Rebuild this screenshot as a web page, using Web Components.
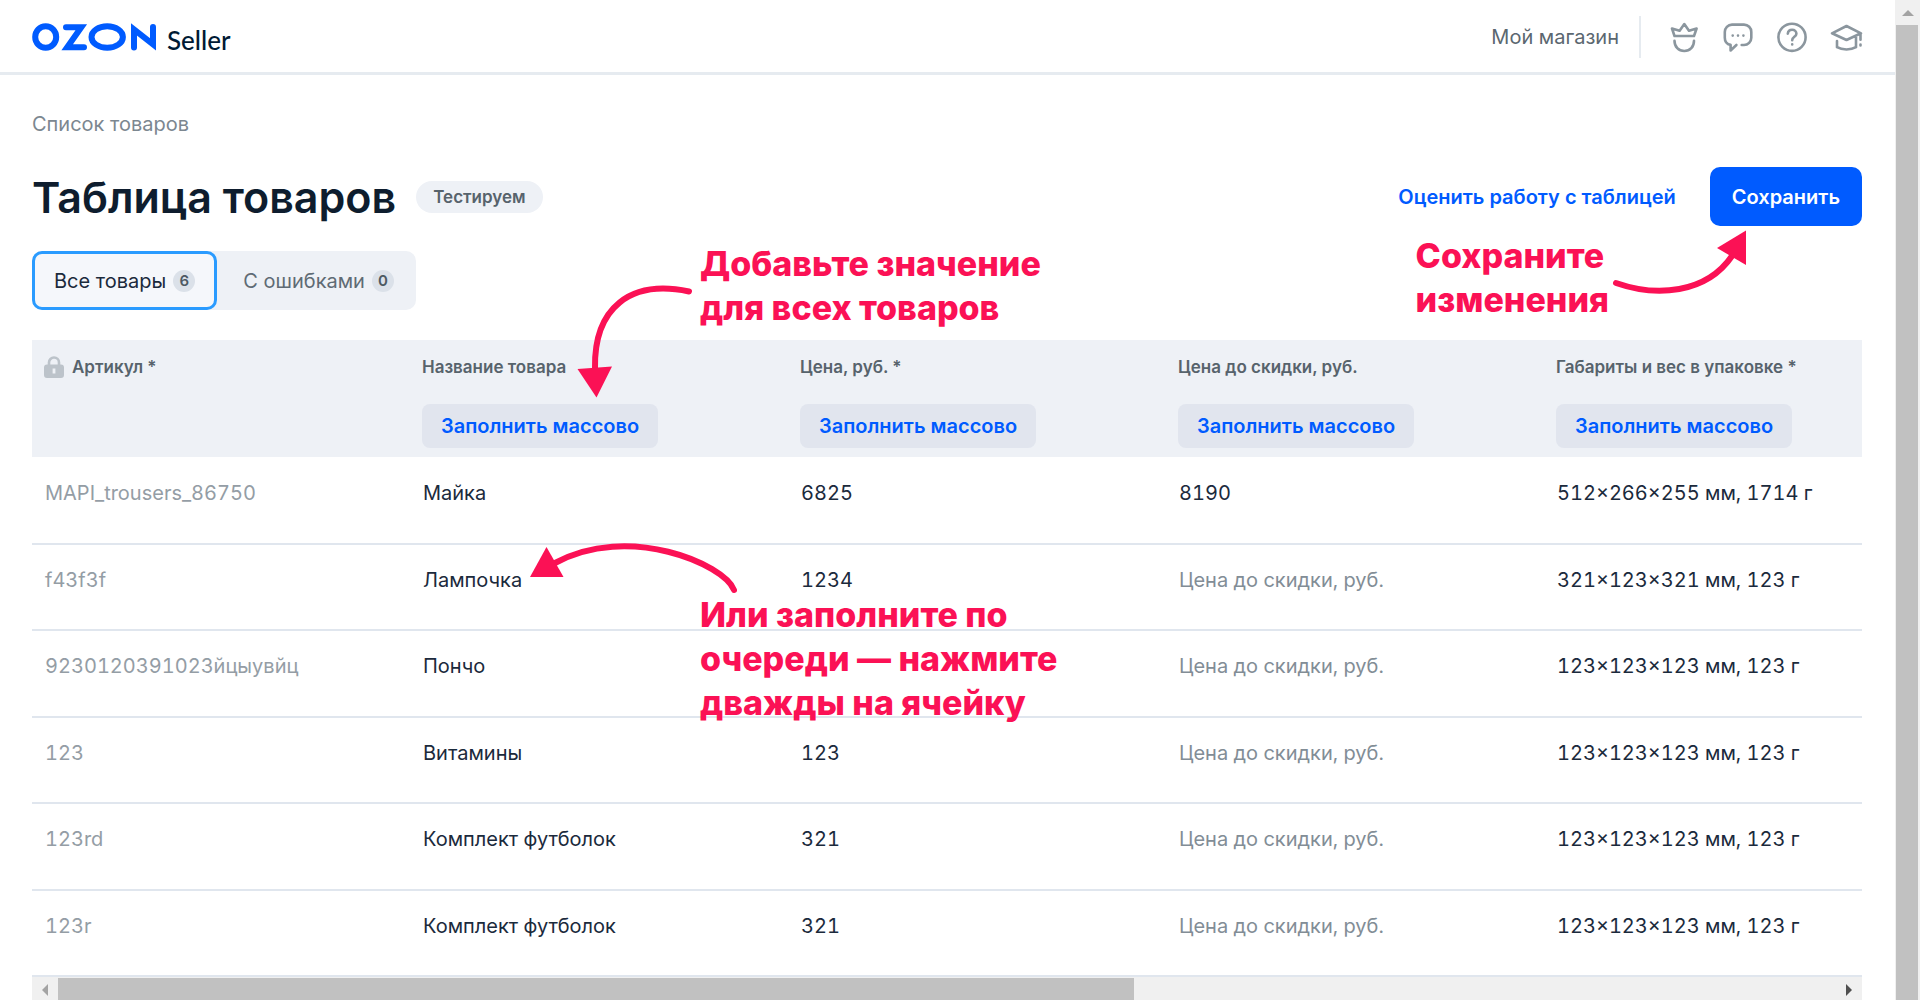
<!DOCTYPE html>
<html lang="ru">
<head>
<meta charset="utf-8">
<title>Таблица товаров — Ozon Seller</title>
<style>
  html, body { height: 100%; margin: 0; }
  body { font: 400 20px/24px Inter, "Liberation Sans", sans-serif; color: #1b2a3c; background: #fff; overflow: hidden; }
</style>
</head>
<body>
<seller-app></seller-app>
<script>
class Base extends HTMLElement {
  constructor() {
    super();
    this.attachShadow({ mode: 'open' }).innerHTML =
      '<style>*{box-sizing:border-box}button{font:inherit;border:0;cursor:pointer}a{text-decoration:none}</style>' + this.view();
  }
}

customElements.define('seller-logo', class extends Base {
  view() { return `
    <style>
      :host { display: block; }
      a { display: flex; align-items: center; gap: 10px; color: #001a34; font: 500 26px/28px Lato, sans-serif; }
      svg { display: block; }
      span { padding-top: 6px; }
    </style>
    <a href="#" aria-label="Ozon Seller">
      <svg width="125" height="28" viewBox="0 0 125 28" fill="none" stroke="#005bff" stroke-width="6" stroke-linecap="round" stroke-miterlimit="10" aria-hidden="true">
        <ellipse cx="13.7" cy="14" rx="10.5" ry="10.8"/>
        <path d="M34 4.2H49.3L35.2 24.2H52"/>
        <ellipse cx="75.2" cy="14" rx="15.7" ry="10.8"/>
        <path d="M102 24.4V6.4L121 21.4V3.9"/>
      </svg>
      <span>Seller</span>
    </a>`; }
});

const ICONS = {
  crown: '<path d="M3 6.5 5.5 14H25L27.6 6.5 20 8.8 15.3 2 10.6 8.8ZM5.5 18.7C5.5 25 9.6 29 15.3 29S25 25 25 18.7"/>',
  chat: '<path d="M18.7 23H21a7.3 7.3 0 0 0 7.3-7.3V10A7.3 7.3 0 0 0 21 2.6H9A7.3 7.3 0 0 0 1.8 10v5.7c0 4 2.2 6.5 5.8 7.2v5.6L13.4 23"/><path d="M9.7 13.6h.01M15 13.6h.01M20.4 13.6h.01"/>',
  help: '<circle cx="15" cy="15.3" r="13.6"/><path d="M10.8 11.6c.3-2.4 2-3.8 4.3-3.8 2.5 0 4.3 1.6 4.3 3.9 0 3.1-4.2 3.2-4.2 6.5M15.2 22.4h.01"/>',
  cap: '<path d="M1 11.3 15.5 4 30 11.3 15.5 18ZM6 19v6.2c5 3 14 3 19 0V15M29.5 11.8v6M29.5 22.5v1"/>'
};
customElements.define('icon-button', class extends HTMLElement {
  connectedCallback() {
    this.attachShadow({ mode: 'open' }).innerHTML = `
      <style>
        :host { display: block; }
        button { display: block; padding: 0; border: 0; background: none; cursor: pointer; }
        svg { display: block; overflow: visible; }
      </style>
      <button aria-label="${this.getAttribute('label')}">
        <svg width="30" height="30" viewBox="0 0 30 30" fill="none" stroke="#8b969e" stroke-width="2.6" stroke-linecap="round" stroke-linejoin="round">${ICONS[this.getAttribute('name')]}</svg>
      </button>`;
  }
});

customElements.define('top-bar', class extends Base {
  view() { return `
    <style>
      :host { display: block; border-bottom: 3px solid #e6ebf0; }
      header { display: flex; justify-content: space-between; align-items: center; height: 72px; padding: 2px 34px 0 32px; }
      .side { display: flex; align-items: center; gap: 24px; }
      .shop { color: #5b6770; padding-right: 20px; line-height: 42px; border-right: 2px solid #e6ebf0; margin-right: 4px; }
    </style>
    <header>
      <seller-logo></seller-logo>
      <div class="side">
        <a class="shop" href="#">Мой магазин</a>
        <icon-button name="crown" label="Премиум"></icon-button>
        <icon-button name="chat" label="Сообщения"></icon-button>
        <icon-button name="help" label="Помощь"></icon-button>
        <icon-button name="cap" label="Обучение"></icon-button>
      </div>
    </header>`; }
});

customElements.define('title-row', class extends Base {
  view() { return `
    <style>
      :host { display: flex; justify-content: space-between; align-items: center; }
      div { display: flex; align-items: center; }
      .name { gap: 20px; }
      h1 { margin: 0; font-size: 43px; line-height: 52px; font-weight: 600; color: #0e1d2e; }
      .tag { font-size: 17px; line-height: 32px; font-weight: 600; color: #57636c; background: #eef1f6; border-radius: 16px; padding: 0 17px; }
      .act { gap: 34px; font-weight: 600; }
      .act a { color: #005bff; }
      button { height: 59px; padding: 0 22px; border-radius: 10px; color: #fff; background: #005bff; }
    </style>
    <div class="name"><h1>Таблица товаров</h1><span class="tag">Тестируем</span></div>
    <div class="act"><a href="#">Оценить работу с таблицей</a><button>Сохранить</button></div>`; }
});

customElements.define('filter-tabs', class extends Base {
  view() { return `
    <style>
      :host { display: flex; }
      div { display: flex; gap: 4px; background: #eef1f6; border-radius: 10px; }
      button { display: flex; align-items: center; gap: 7px; height: 59px; padding: 0 22px; border-radius: 10px; color: #5f6b74; background: none; }
      button[aria-selected=true] { padding: 0 19px; border: 3px solid #2a9bff; background: #f5f7fb; color: #1b2a3c; }
      b { min-width: 22px; border-radius: 11px; background: #dbe1e9; color: #4d5963; font-size: 15px; line-height: 22px; font-weight: 600; text-align: center; }
    </style>
    <div role="tablist">
      <button role="tab" aria-selected="true">Все товары <b>6</b></button>
      <button role="tab" aria-selected="false">С ошибками <b>0</b></button>
    </div>`; }
});

const ROWS = [
  ['MAPI_trousers_86750', 'Майка', '6825', '8190', '512×266×255 мм, 1714 г'],
  ['f43f3f', 'Лампочка', '1234', '', '321×123×321 мм, 123 г'],
  ['9230120391023йцыувйц', 'Пончо', '', '', '123×123×123 мм, 123 г'],
  ['123', 'Витамины', '123', '', '123×123×123 мм, 123 г'],
  ['123rd', 'Комплект футболок', '321', '', '123×123×123 мм, 123 г'],
  ['123r', 'Комплект футболок', '321', '', '123×123×123 мм, 123 г']
];
customElements.define('goods-table', class extends Base {
  view() {
    const fill = '<button>Заполнить массово</button>';
    const heads = ['Название товара', 'Цена, руб. *', 'Цена до скидки, руб.', 'Габариты и вес в упаковке *'];
    return `
    <style>
      :host { display: block; overflow: hidden; }
      table { width: 1890px; table-layout: fixed; border-collapse: separate; border-spacing: 0; }
      th { height: 117px; padding: 15px 12px 0; background: #eef1f6; text-align: left; vertical-align: top; font-size: 17px; line-height: 24px; font-weight: 600; color: #57636c; }
      .lab { display: flex; align-items: center; gap: 8px; }
      th button { display: block; height: 44px; margin-top: 25px; padding: 0 19px; border-radius: 8px; background: #e1e5ee; color: #005bff; font-size: 20px; }
      td { height: 86px; padding: 23px 13px 0; vertical-align: top; border-bottom: 2px solid #e0e6ee; font-variant-numeric: tabular-nums; white-space: nowrap; }
      tbody tr:nth-child(odd) td { height: 87px; }
      tbody tr:first-child td { height: 88px; padding-top: 24px; }
      td:first-child { color: #949da5; }
      .hint { color: #828d96; }
    </style>
    <table>
      <thead><tr>
        <th><span class="lab"><svg width="20" height="22" viewBox="0 0 20 22" aria-hidden="true"><path d="M5 10V6.5a5 5 0 0 1 10 0V10" fill="none" stroke="#bcc3ca" stroke-width="2.6"/><path fill-rule="evenodd" fill="#bcc3ca" d="M3 8.5h14a3 3 0 0 1 3 3V19a3 3 0 0 1-3 3H3a3 3 0 0 1-3-3v-7.5a3 3 0 0 1 3-3ZM8.6 12.5v5h2.8v-5Z"/></svg>Артикул *</span></th>
        ${heads.map(h => `<th>${h}${fill}</th>`).join('')}
      </tr></thead>
      <tbody>${ROWS.map(r => `<tr>${r.map((c, i) => i === 3 && !c ? '<td class="hint">Цена до скидки, руб.</td>' : `<td>${c}</td>`).join('')}</tr>`).join('')}</tbody>
    </table>`;
  }
});

customElements.define('scroll-bar', class extends Base {
  view() { return `
    <style>
      :host { display: flex; background: #f0f0f0; height: 25px; }
      :host([vertical]) { flex-direction: column; width: 25px; height: auto; }
      .arrow { flex: 0 0 26px; display: grid; place-items: center; }
      i { width: 0; height: 0; border: 6px solid transparent; }
      .first { border-width: 6px 6px 6px 0; border-right-color: #a3a3a3; }
      .last { border-width: 6px 0 6px 6px; border-left-color: #505050; }
      .track { flex: 1; display: flex; }
      .thumb { flex: 0 0 60.5%; background: #c1c1c1; margin-top: 1px; }
      :host([vertical]) .arrow { flex-basis: 25px; }
      :host([vertical]) .first { border-width: 0 6px 6px; border-color: transparent transparent #a3a3a3; }
      :host([vertical]) .thumb { flex: 1; margin: 0 2px 0 1px; }
      :host([vertical]) .end { display: none; }
    </style>
    <span class="arrow"><i class="first"></i></span>
    <span class="track"><span class="thumb"></span></span>
    <span class="arrow end"><i class="last"></i></span>`; }
});

/* A hint laid over the page: slotted text plus a curved arrow. */
customElements.define('coach-mark', class extends HTMLElement {
  connectedCallback() {
    const a = n => this.getAttribute(n);
    this.attachShadow({ mode: 'open' }).innerHTML = `
      <style>
        :host { position: absolute; pointer-events: none; white-space: nowrap; color: #fb1155; font-size: 34px; line-height: 44px; font-weight: 800; }
        svg { position: absolute; left: 0; top: 0; width: 1px; height: 1px; overflow: visible; }
      </style>
      <svg aria-hidden="true"><path d="${a('curve')}" fill="none" stroke="#fb1155" stroke-width="6" stroke-linecap="round"/><path d="${a('head')}" fill="#fb1155"/></svg>
      <slot></slot>`;
  }
});

customElements.define('seller-app', class extends Base {
  view() { return `
    <style>
      :host { display: flex; height: 100vh; overflow: hidden; }
      .page { flex: 1; min-width: 0; position: relative; }
      main { display: flex; flex-direction: column; padding: 37px 33px 0 32px; }
      nav { margin-bottom: 31px; }
      nav a { display: block; color: #7c8790; }
      filter-tabs { margin: 25px 0 30px; }
      .add { left: 700px; top: 242px; }
      .each { left: 700px; top: 593px; }
      .save { right: 286px; top: 234px; }
    </style>
    <div class="page">
      <top-bar></top-bar>
      <main>
        <nav><a href="#">Список товаров</a></nav>
        <title-row></title-row>
        <filter-tabs></filter-tabs>
        <goods-table></goods-table>
        <scroll-bar></scroll-bar>
      </main>
      <coach-mark class="add" curve="M-11 49.5C-70 37-106 66-105 126" head="M-122.5 127-88 124.5-103.5 155.5Z">Добавьте значение<br>для всех товаров</coach-mark>
      <coach-mark class="each" curve="M34-3C24-29-72-70-145-30" head="M-170-16-153.5-46-136.5-16Z">Или заполните по<br>очереди — нажмите<br>дважды на ячейку</coach-mark>
      <coach-mark class="save" curve="M200 49C240 63 290 60 316 22" head="M330-3.5V31L301 14Z">Сохраните<br>изменения</coach-mark>
    </div>
    <scroll-bar vertical></scroll-bar>`; }
});
</script>
</body>
</html>
